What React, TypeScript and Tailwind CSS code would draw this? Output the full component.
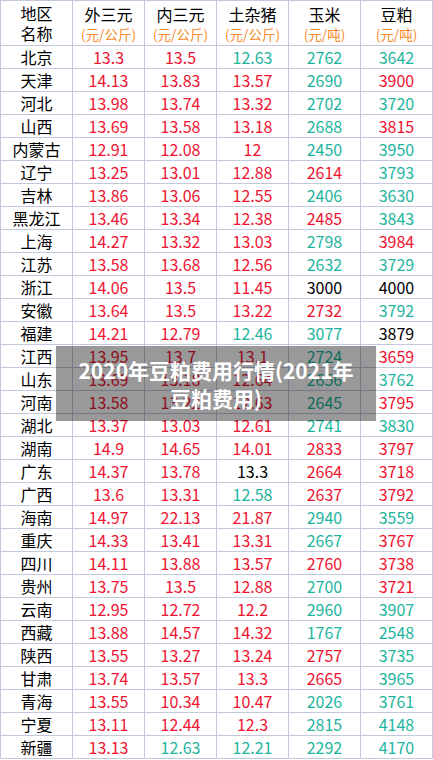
import React from "react";

type C = "r" | "t" | "k";

const rows: [string, [string, C][]][] = [
  ["北京", [["13.3", "r"], ["13.5", "r"], ["12.63", "t"], ["2762", "t"], ["3642", "t"]]],
  ["天津", [["14.13", "r"], ["13.83", "r"], ["13.57", "r"], ["2690", "t"], ["3900", "r"]]],
  ["河北", [["13.98", "r"], ["13.74", "r"], ["13.32", "r"], ["2702", "t"], ["3720", "t"]]],
  ["山西", [["13.69", "r"], ["13.58", "r"], ["13.18", "r"], ["2688", "t"], ["3815", "r"]]],
  ["内蒙古", [["12.91", "r"], ["12.08", "r"], ["12", "r"], ["2450", "t"], ["3950", "t"]]],
  ["辽宁", [["13.25", "r"], ["13.01", "r"], ["12.88", "r"], ["2614", "r"], ["3793", "t"]]],
  ["吉林", [["13.86", "r"], ["13.06", "r"], ["12.55", "r"], ["2406", "t"], ["3630", "t"]]],
  ["黑龙江", [["13.46", "r"], ["13.34", "r"], ["12.38", "r"], ["2485", "r"], ["3843", "t"]]],
  ["上海", [["14.27", "r"], ["13.32", "r"], ["13.03", "r"], ["2798", "t"], ["3984", "r"]]],
  ["江苏", [["13.58", "r"], ["13.68", "r"], ["12.56", "r"], ["2632", "t"], ["3729", "t"]]],
  ["浙江", [["14.06", "r"], ["13.5", "r"], ["11.45", "r"], ["3000", "k"], ["4000", "k"]]],
  ["安徽", [["13.64", "r"], ["13.5", "r"], ["13.22", "r"], ["2732", "r"], ["3792", "t"]]],
  ["福建", [["14.21", "r"], ["12.79", "r"], ["12.46", "t"], ["3077", "t"], ["3879", "k"]]],
  ["江西", [["13.95", "r"], ["13.7", "r"], ["13.1", "r"], ["2724", "t"], ["3659", "r"]]],
  ["山东", [["13.69", "r"], ["13.18", "r"], ["12.64", "r"], ["2656", "t"], ["3762", "t"]]],
  ["河南", [["13.58", "r"], ["13.22", "r"], ["12.63", "r"], ["2645", "t"], ["3795", "r"]]],
  ["湖北", [["13.37", "r"], ["13.03", "r"], ["12.61", "r"], ["2741", "t"], ["3830", "t"]]],
  ["湖南", [["14.9", "r"], ["14.65", "r"], ["14.01", "r"], ["2833", "r"], ["3797", "r"]]],
  ["广东", [["14.37", "r"], ["13.78", "r"], ["13.3", "k"], ["2664", "r"], ["3718", "r"]]],
  ["广西", [["13.6", "r"], ["13.31", "r"], ["12.58", "t"], ["2637", "r"], ["3792", "r"]]],
  ["海南", [["14.97", "r"], ["22.13", "r"], ["21.87", "r"], ["2940", "t"], ["3559", "t"]]],
  ["重庆", [["14.33", "r"], ["13.41", "r"], ["13.31", "r"], ["2667", "t"], ["3767", "r"]]],
  ["四川", [["14.11", "r"], ["13.88", "r"], ["13.57", "r"], ["2760", "r"], ["3738", "r"]]],
  ["贵州", [["13.75", "r"], ["13.5", "r"], ["12.88", "r"], ["2700", "t"], ["3721", "r"]]],
  ["云南", [["12.95", "r"], ["12.72", "r"], ["12.2", "r"], ["2960", "t"], ["3907", "t"]]],
  ["西藏", [["13.88", "r"], ["14.57", "r"], ["14.32", "r"], ["1767", "t"], ["2548", "t"]]],
  ["陕西", [["13.55", "r"], ["13.27", "r"], ["13.24", "r"], ["2757", "r"], ["3735", "t"]]],
  ["甘肃", [["13.74", "r"], ["13.57", "r"], ["13.3", "r"], ["2665", "r"], ["3965", "t"]]],
  ["青海", [["13.55", "r"], ["10.34", "r"], ["10.47", "r"], ["2026", "t"], ["3761", "t"]]],
  ["宁夏", [["13.11", "r"], ["12.44", "r"], ["12.3", "r"], ["2815", "t"], ["4148", "t"]]],
  ["新疆", [["13.13", "r"], ["12.63", "t"], ["12.21", "t"], ["2292", "t"], ["4170", "t"]]],
];

const colorClass: Record<C, string> = {
  r: "text-[#f0122f]",
  t: "text-[#1db59e]",
  k: "text-black",
};

const headers: [string, string][] = [
  ["外三元", "(元/公斤)"],
  ["内三元", "(元/公斤)"],
  ["土杂猪", "(元/公斤)"],
  ["玉米", "(元/吨)"],
  ["豆粕", "(元/吨)"],
];

export default function App() {
  return (
    <div className="relative w-[433px] h-[760px] overflow-hidden bg-white font-['Noto_Sans_CJK_SC','Noto_Sans',sans-serif]">
      <table className="w-[432px] table-fixed border-collapse text-[16px] leading-none">
        <thead>
          <tr className="h-[45px]">
            <th className="w-[72px] border border-[#c3c8dc] font-normal text-black">
              <div className="leading-[20px]">地区</div>
              <div className="leading-[20px]">名称</div>
            </th>
            {headers.map(([name, unit]) => (
              <th key={name} className="w-[72px] border border-[#c3c8dc] font-normal">
                <div className="leading-[22px] text-black">{name}</div>
                <div className="leading-[18px] text-[13.5px] text-[#f98a2c]">{unit}</div>
              </th>
            ))}
          </tr>
        </thead>
        <tbody>
          {rows.map(([region, cells]) => (
            <tr key={region} className="h-[23px]">
              <td className="border border-[#c3c8dc] text-center text-black">{region}</td>
              {cells.map(([v, c], i) => (
                <td key={i} className={`border border-[#c3c8dc] text-center ${colorClass[c]}`}>
                  {v}
                </td>
              ))}
            </tr>
          ))}
        </tbody>
      </table>

      {/* caption overlay */}
      <div className="absolute left-[56px] top-[346px] w-[320px] h-[75px] bg-black/40 flex items-center justify-center">
        <p className="text-white font-bold text-[21px] leading-[28px] text-center whitespace-nowrap">
          2020年豆粕费用行情(2021年
          <br />
          豆粕费用)
        </p>
      </div>
    </div>
  );
}
